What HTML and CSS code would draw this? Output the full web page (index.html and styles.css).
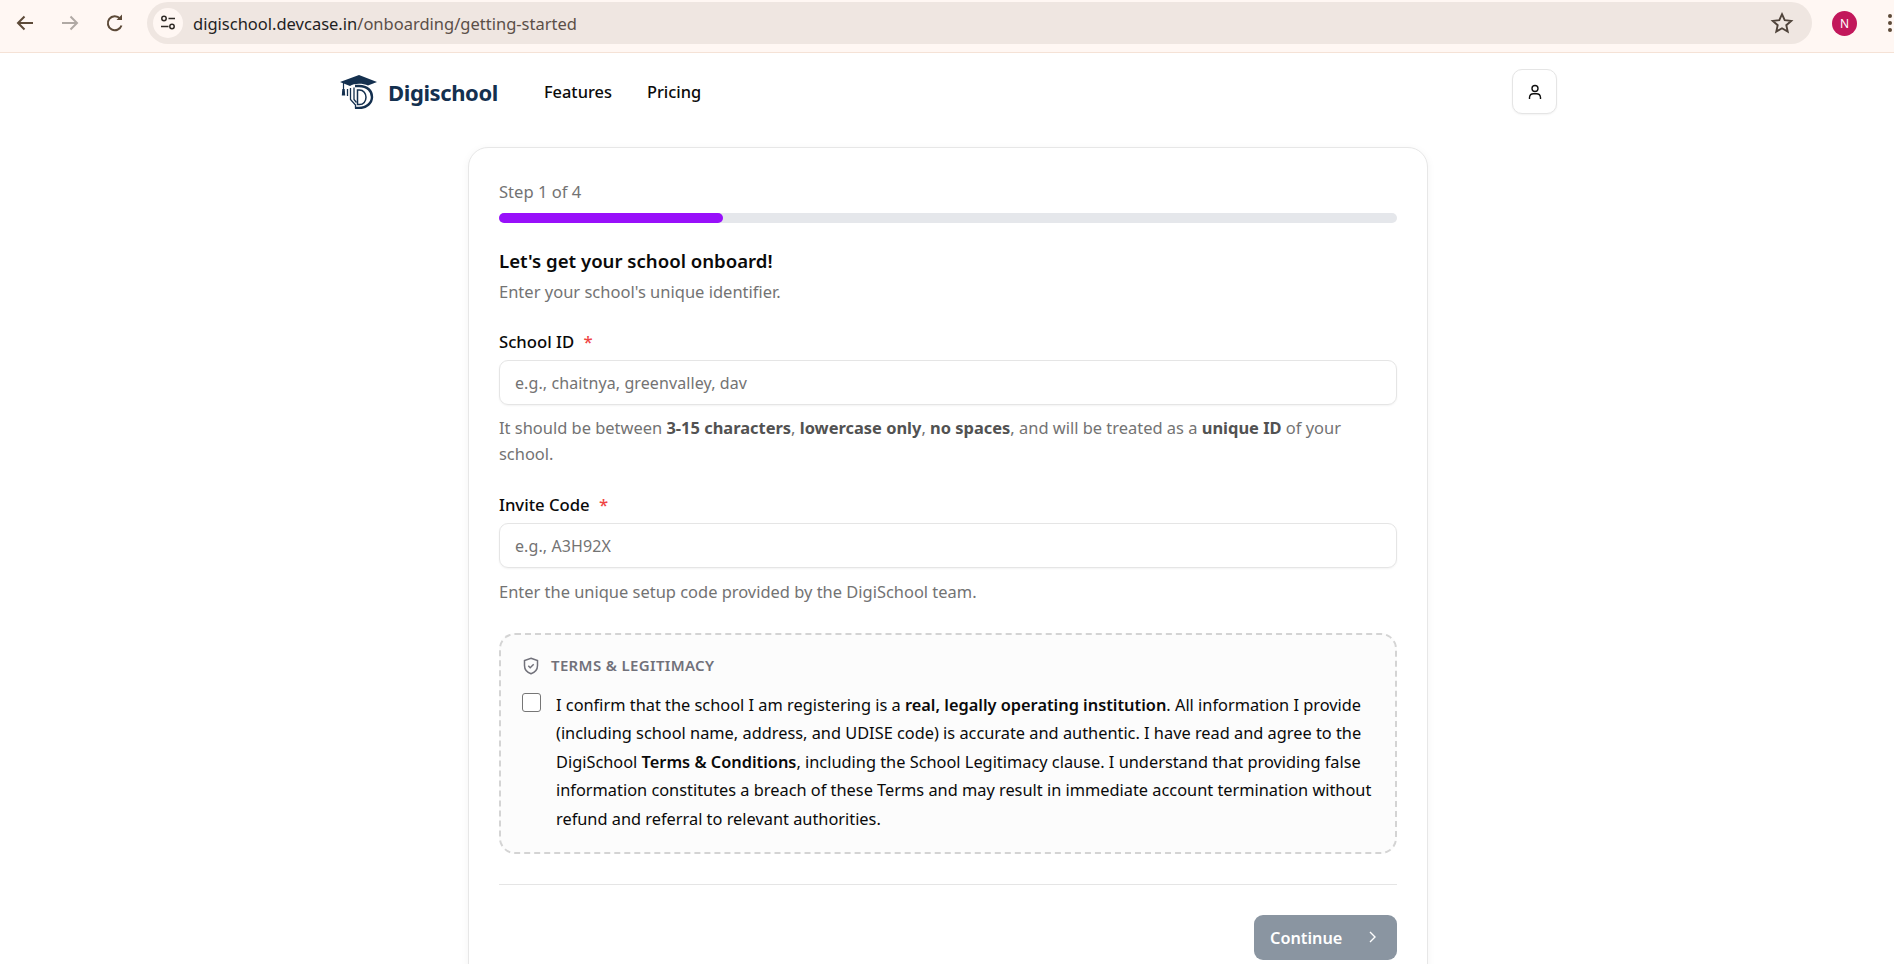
FILE: index.html
```html
<!DOCTYPE html>
<html lang="en">
<head>
<meta charset="utf-8">
<title>Digischool</title>
<link rel="stylesheet" href="styles.css">
</head>
<body>
<div class="chrome">
  <div class="nav-icons">
    <svg class="ci" viewBox="0 0 24 24"><path d="M20 12H5M11.500 5.500 5 12l6.500 6.500" fill="none" stroke="#5d4a38" stroke-width="2"/></svg>
    <svg class="ci" viewBox="0 0 24 24"><path d="M4 12h15M12.500 5.500 19 12l-6.500 6.500" fill="none" stroke="#b0a9a4" stroke-width="2"/></svg>
    <svg class="ci" viewBox="0 0 24 24"><path d="M18.500 14.500A7 7 0 1 1 17 7.500" fill="none" stroke="#5d4a38" stroke-width="2"/><path d="M19 3.500V9h-5.500z" fill="#5d4a38"/></svg>
  </div>
  <div class="omnibox">
    <span class="tune"><svg width="16" height="16" viewBox="0 0 16 16"><circle cx="4" cy="3.500" r="2.200" fill="none" stroke="#2f2a26" stroke-width="1.500"/><path d="M8.500 3.500H15M1 11.500h7.500" stroke="#2f2a26" stroke-width="1.700"/><circle cx="12" cy="11.500" r="2.200" fill="none" stroke="#2f2a26" stroke-width="1.500"/></svg></span>
    <span class="url"><span class="host">digischool.devcase.in</span>/onboarding/getting-started</span>
    <svg class="star" viewBox="0 0 24 24"><path d="m12 3.200 2.700 6 6.500.7-4.900 4.300 1.400 6.400L12 17.300l-5.700 3.300 1.400-6.400L2.800 9.900l6.500-.7z" fill="none" stroke="#4f433a" stroke-width="1.900"/></svg>
  </div>
  <span class="avatar">N</span>
  <span class="dots"><i></i><i></i><i></i></span>
</div>

<header class="site-header">
  <div class="brand">
    <svg class="logo" viewBox="0 0 37 34">
      <path d="M19 0 37 7l-9 3.500C23 8 14 8 10 11L0 7z" fill="#14304f"/>
      <path d="M3.500 7.500v7" stroke="#14304f" stroke-width="1.200" fill="none"/>
      <path d="M2.300 14h2.400l.5 6.500H1.800z" fill="#14304f"/>
      <path d="M15 11h4c8.500 0 13 5 13 11s-5.500 11-13 11h-4" fill="none" stroke="#14304f" stroke-width="2.400"/>
      <path d="M17.500 15v14.500h2c4 0 6.500-3.200 6.500-7.200S23.500 15 19.500 15z" fill="none" stroke="#14304f" stroke-width="1.500"/>
      <path d="M14 12.500v12l2.500 3M10.500 13v11.500l5 5.500v3.500M7.500 14v7" fill="none" stroke="#14304f" stroke-width="1.300"/>
    </svg>
    <span class="brand-name">Digischool</span>
  </div>
  <nav class="site-nav"><a>Features</a><a>Pricing</a></nav>
  <button class="profile" type="button" aria-label="Profile">
    <svg width="16" height="16" viewBox="0 0 16 16"><circle cx="8" cy="4.500" r="3" fill="none" stroke="#111" stroke-width="1.400"/><path d="M2.500 15v-1.500A4 4 0 0 1 6.500 9.800h3a4 4 0 0 1 4 3.700V15" fill="none" stroke="#111" stroke-width="1.400"/></svg>
  </button>
</header>

<main class="card">
  <div class="step">Step 1 of 4</div>
  <div class="track"><div class="fill"></div></div>
  <h1 class="title">Let's get your school onboard!</h1>
  <p class="sub">Enter your school's unique identifier.</p>

  <label class="label label-first">School ID <span class="req">*</span></label>
  <div class="input">e.g., chaitnya, greenvalley, dav</div>
  <p class="help">It should be between <b>3-15 characters</b>, <b>lowercase only</b>, <b>no spaces</b>, and will be treated as a <b>unique ID</b> of your<br>school.</p>

  <label class="label label-second">Invite Code <span class="req">*</span></label>
  <div class="input">e.g., A3H92X</div>
  <p class="help help-last">Enter the unique setup code provided by the DigiSchool team.</p>

  <section class="terms">
    <div class="terms-head">
      <svg width="18" height="18" viewBox="0 0 18 18"><path d="M9 1.200 15.500 3.500v5c0 4.200-2.800 7-6.500 8.300C5.300 15.500 2.500 12.700 2.500 8.500v-5z" fill="none" stroke="#71717a" stroke-width="1.500"/><path d="m6.300 8.800 1.900 1.900 3.500-3.500" fill="none" stroke="#71717a" stroke-width="1.500"/></svg>
      <span>TERMS &amp; LEGITIMACY</span>
    </div>
    <div class="terms-body">
      <span class="check"></span>
      <p class="terms-text">I confirm that the school I am registering is a <b>real, legally operating institution</b>. All information I provide (including school name, address, and UDISE code) is accurate and authentic. I have read and agree to the DigiSchool <b>Terms &amp; Conditions</b>, including the School Legitimacy clause. I understand that providing false information constitutes a breach of these Terms and may result in immediate account termination without refund and referral to relevant authorities.</p>
    </div>
  </section>

  <div class="actions">
    <button class="continue" type="button"><span class="continue-label">Continue</span>
      <svg width="16" height="16" viewBox="0 0 16 16"><path d="m6 3 5 5-5 5" fill="none" stroke="#fff" stroke-width="1.400"/></svg>
    </button>
  </div>
</main>
</body>
</html>
```
FILE: styles.css
```css
html { overflow: hidden; height: 964px; background: #fff; }
body {
  margin: 0;
  width: 1896px;
  height: 964px;
  overflow: hidden;
  font-family: "Noto Sans", "Open Sans", sans-serif;
  font-size: 16px;
  color: #0a0a0a;
  background: #fff;
}
.chrome {
  display: flex;
  align-items: center;
  height: 53px;
  padding-bottom: 6px;
  box-sizing: border-box;
  background: #fff7f3;
  border-bottom: 1px solid #f5e2d6;
}
.nav-icons { display: flex; gap: 21px; padding-left: 13px; width: 134px; box-sizing: border-box; }
.ci { width: 24px; height: 24px; }
.omnibox {
  display: flex;
  align-items: center;
  flex: 0 0 1665px;
  height: 42px;
  margin-left: 13px;
  border-radius: 21px;
  background: #efe6e1;
  box-sizing: border-box;
  padding: 0 18px 0 6px;
}
.tune {
  display: flex;
  align-items: center;
  justify-content: center;
  width: 30px;
  height: 30px;
  border-radius: 50%;
  background: #fff7f3;
}
.url {
  margin-left: 10px;
  font-size: 16.500px;
  color: #5b4f48;
  flex: 1;
}
.host { color: #1f1f1f; }
.star { width: 24px; height: 24px; }
.avatar {
  display: flex;
  align-items: center;
  justify-content: center;
  width: 25px;
  height: 25px;
  margin-left: 20px;
  border-radius: 50%;
  background: #c2185b;
  color: #fff;
  font-size: 12px;
}
.dots { display: flex; flex-direction: column; gap: 3px; margin-left: 31px; }
.dots i { width: 4px; height: 4px; border-radius: 50%; background: #5d4a38; display: block; }

.site-header {
  display: flex;
  align-items: center;
  width: 1280px;
  height: 77px;
  margin: 0 auto;
  padding: 0 31px 0 32px;
  box-sizing: border-box;
}
.brand { display: flex; align-items: center; gap: 11px; }
.logo { width: 37px; height: 34px; }
.brand-name { font-size: 22px; font-weight: 700; color: #14304f; letter-spacing: -0.4px; }
.site-nav { display: flex; gap: 35px; margin-left: 46px; font-size: 16.400px; font-weight: 500; }
.profile {
  margin-left: auto;
  width: 45px;
  height: 45px;
  padding: 0;
  display: flex;
  align-items: center;
  justify-content: center;
  background: #fff;
  border: 1px solid #e5e5e5;
  border-radius: 10px;
  box-shadow: 0 1px 2px rgba(0,0,0,.05);
}

.card {
  width: 960px;
  box-sizing: border-box;
  margin: 17px auto 0;
  padding: 31px 30px 40px;
  background: #fff;
  border: 1px solid #e7e7e7;
  border-radius: 20px;
  box-shadow: 0 2px 8px rgba(0,0,0,.05);
}
.step { color: #737373; line-height: 26px; font-size: 16.600px; }
.track { height: 10px; margin-top: 8px; border-radius: 5px; background: #e5e7eb; }
.fill { width: 24.900%; height: 100%; border-radius: 5px; background: #9810fa; }
.title { margin: 24px 0 0; font-size: 18.600px; font-weight: 600; line-height: 28px; }
.sub { margin: 5px 0 0; color: #737373; line-height: 24px; font-size: 16.500px; }
.label { display: block; font-weight: 500; line-height: 24px; font-size: 16.700px; }
.label-first { margin-top: 26px; }
.label-second { margin-top: 26.800px; }
.req { color: #ef4444; margin-left: 5px; }
.input {
  height: 45px;
  margin-top: 6px;
  padding: 1px 15px 0;
  box-sizing: border-box;
  display: flex;
  align-items: center;
  color: #737373;
  letter-spacing: 0.1px;
  border: 1px solid #e5e5e5;
  border-radius: 9px;
  box-shadow: 0 1px 2px rgba(0,0,0,.05);
}
.help { margin: 10px 0 0; color: #737373; line-height: 25.600px; font-size: 16.450px; }
.help-last { margin-top: 11px; }
.help b { color: #525252; font-weight: 700; }
.terms {
  margin-top: 28.400px;
  padding: 20px 21px;
  height: 221px;
  box-sizing: border-box;
  background: #fcfcfc;
  border: 2px dashed #d4d4d4;
  border-radius: 16px;
}
.terms-head { display: flex; align-items: center; gap: 11px; height: 20px; margin-top: 1px; }
.terms-head span { font-size: 15px; font-weight: 600; color: #71717a; letter-spacing: 0.35px; padding-bottom: 2px; }
.terms-body { display: flex; gap: 15px; margin-top: 15px; }
.check {
  flex: none;
  width: 19px;
  height: 19px;
  margin-top: 2px;
  box-sizing: border-box;
  border: 1.500px solid #767676;
  border-radius: 3px;
  background: #fff;
}
.terms-text { margin: 0; line-height: 28.400px; font-size: 16.350px; }
.terms-text b { font-weight: 600; }
.actions {
  margin-top: 30px;
  padding-top: 30px;
  border-top: 1px solid #e5e5e5;
  display: flex;
  justify-content: flex-end;
}
.continue {
  display: flex;
  align-items: center;
  justify-content: space-between;
  width: 143px;
  height: 45px;
  padding: 0 17px 0 16px;
  box-sizing: border-box;
  font: inherit;
  font-size: 16.300px;
  font-weight: 600;
  color: #fff;
  background: #8a95a1;
  border: 0;
  border-radius: 9px;
}
.continue-label { padding-top: 2px; }
```
